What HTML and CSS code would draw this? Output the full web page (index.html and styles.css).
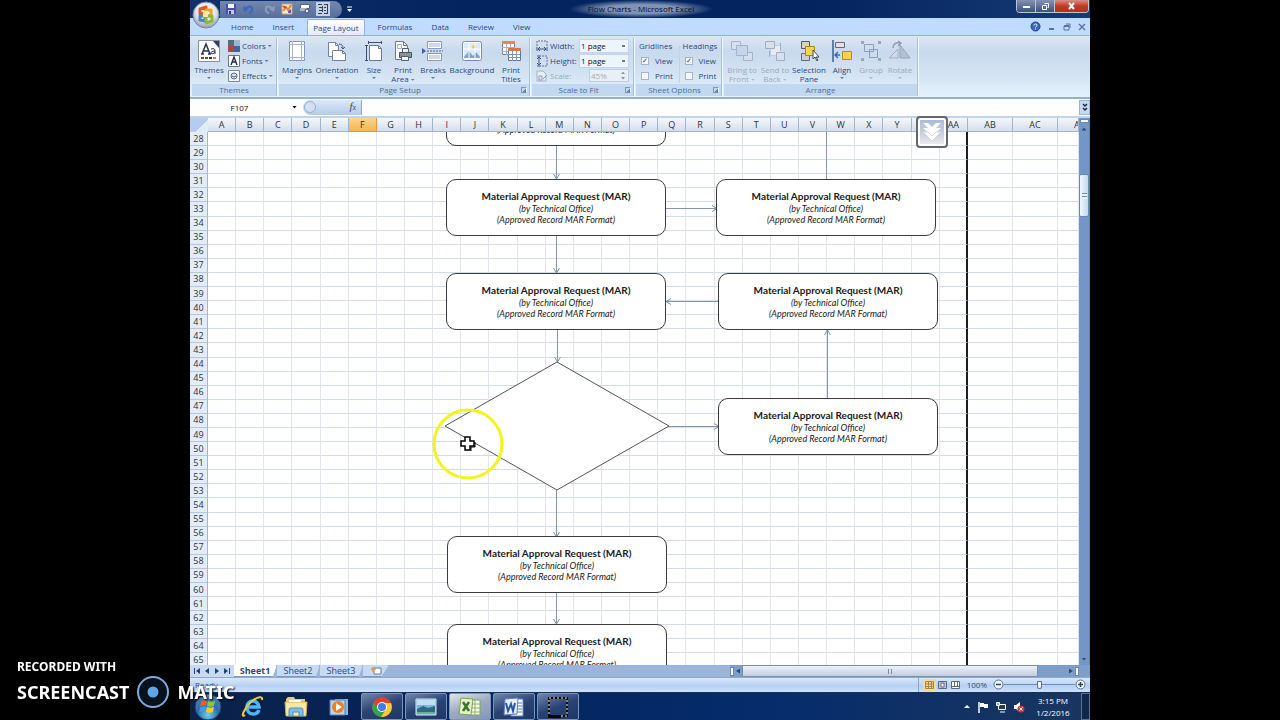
FILE: index.html
```html
<!DOCTYPE html>
<html lang="en">
<head>
  <meta charset="UTF-8" />
  <meta name="viewport" content="width=device-width, initial-scale=1.0"/>
  <title>Flow Charts - Microsoft Excel</title>
  <link rel="stylesheet" href="styles.css">
</head>
<body>
  <div class="desktop">

    <header class="title-bar">
      <button class="office-button" aria-label="Office Button">
        <svg width="28" height="28" viewBox="0 0 28 28">
          <defs>
            <radialGradient id="orb" cx="50%" cy="35%" r="65%">
              <stop offset="0" stop-color="#ffffff"/><stop offset=".6" stop-color="#dfe4ea"/><stop offset="1" stop-color="#8d9bb0"/>
            </radialGradient>
          </defs>
          <circle cx="14" cy="14" r="13" fill="url(#orb)" stroke="#7787a0"/>
          <g fill="none" stroke-width="3" stroke-linejoin="round">
            <path d="M8 8l6-2v6l-6 1z" stroke="#e2591c"/>
            <path d="M14 9l5 0v6h-5z" stroke="#f0a224"/>
            <path d="M8 15h5v5l-5-1z" stroke="#4a83c9"/>
            <path d="M14 15h6v5l-6 2z" stroke="#8bb838"/>
          </g>
          <path d="M11 10h5v6h-5z" fill="#fbe6a0"/>
        </svg>
      </button>
      <div class="quick-access">
        <button aria-label="Save">
          <svg width="12" height="12" viewBox="0 0 12 12"><path d="M1 1h10v10H1z" fill="#4a4fa8"/><path d="M3 1h6v4H3z" fill="#f4f6ff"/><path d="M3 7h6v4H3z" fill="#c4cbe8"/><path d="M4 8h2v3H4z" fill="#2f3480"/></svg>
        </button>
        <button aria-label="Undo">
          <svg width="14" height="12" viewBox="0 0 14 12"><path d="M4 6c2-4 7-3 6 1 0 2-2 3-3 3" fill="none" stroke="#3c66c4" stroke-width="2"/><path d="M1 3l1 6 5-3z" fill="#3c66c4"/></svg>
        </button>
        <button aria-label="Redo">
          <svg width="14" height="12" viewBox="0 0 14 12"><path d="M10 6C8 2 3 3 4 7c0 2 2 3 3 3" fill="none" stroke="#8a9cbb" stroke-width="2"/><path d="M13 3l-1 6-5-3z" fill="#8a9cbb"/></svg>
        </button>
        <button aria-label="Chart">
          <svg width="12" height="12" viewBox="0 0 12 12"><path d="M1 1h10v10H1z" fill="#f6e9d8" stroke="#c9a37d"/><path d="M2 8l3-4 2 3 3-5" fill="none" stroke="#e08a3c" stroke-width="2"/><path d="M2 3l3 2" stroke="#d2472c" stroke-width="2"/><path d="M7 8l3-2v4H7z" fill="#6f58b0"/></svg>
        </button>
        <button aria-label="Print preview">
          <svg width="12" height="12" viewBox="0 0 12 12"><path d="M1.500 1.500h9v4h-9z" fill="#fff" stroke="#5a6478"/><path d="M1 5h7v3H1z" fill="#aab4c6"/><circle cx="8" cy="8" r="2" fill="#dfe9f8" stroke="#39455c"/></svg>
        </button>
        <button class="pressed" aria-label="Camera">
          <svg width="12" height="12" viewBox="0 0 12 12"><path d="M1 1.500h4M7 1.500h4M1 10.500h4M7 10.500h4M10.500 2v8" stroke="#333d50"/><path d="M2 4.500h3M2 7.500h3M7 4.500h2M7 7.500h2" stroke="#333d50"/><path d="M5.500 3v6" stroke="#333d50"/></svg>
        </button>
      </div>
      <button class="customize" aria-label="Customize Quick Access Toolbar">
        <svg width="7" height="7" viewBox="0 0 7 7"><path d="M1 1h5" stroke="#fff"/><path d="M1 3h5L3.500 6z" fill="#fff"/></svg>
      </button>
      <h1>Flow Charts - Microsoft Excel</h1>
      <div class="window-controls">
        <button aria-label="Minimize"><svg width="9" height="8" viewBox="0 0 9 8"><path d="M1 4h7v2H1z" fill="#fff"/></svg></button>
        <button aria-label="Restore"><svg width="9" height="9" viewBox="0 0 9 9"><path d="M3.500 1.500h4v4h-1M1.500 3.500h4v4h-4z" fill="none" stroke="#fff"/></svg></button>
        <button class="close" aria-label="Close"><svg width="9" height="8" viewBox="0 0 9 8"><path d="M2 1l5 6M7 1L2 7" stroke="#fff" stroke-width="2"/></svg></button>
      </div>
    </header>

    <nav class="ribbon-tabs">
      <button>Home</button>
      <button>Insert</button>
      <button class="active">Page Layout</button>
      <button>Formulas</button>
      <button>Data</button>
      <button>Review</button>
      <button>View</button>
      <div class="book-controls">
        <button aria-label="Help"><svg width="11" height="11" viewBox="0 0 11 11"><circle cx="5.500" cy="5.500" r="4.500" fill="#3a66c0" stroke="#1f4590"/><path d="M4 4.500c0-2 3-2 3 0 0 1-1.500 1-1.500 2M5.500 7.500v1" fill="none" stroke="#fff"/></svg></button>
        <button aria-label="Minimize workbook"><svg width="8" height="8" viewBox="0 0 8 8"><path d="M1 5h5v2H1z" fill="#5c7396"/></svg></button>
        <button aria-label="Restore workbook"><svg width="8" height="8" viewBox="0 0 8 8"><path d="M3 1h4v4M1 3h5v4H1z" fill="none" stroke="#5c7396"/><path d="M1 2h5v2H1z" fill="#5c7396"/></svg></button>
        <button aria-label="Close workbook"><svg width="8" height="8" viewBox="0 0 8 8"><path d="M1 1l6 6M7 1L1 7" stroke="#5c7396" stroke-width="1.400"/></svg></button>
      </div>
    </nav>

    <div class="ribbon">
      <section class="group themes">
        <div class="tools">
          <button class="tool">
            <svg width="22" height="22" viewBox="0 0 22 22"><path d="M.5.500h21v21H.500z" fill="#fdfdfd" stroke="#8a919d"/><path d="M4 14L8 4l4 10M5 11h6M3 14h3M10 14h3" fill="none" stroke="#26324c" stroke-width="1.500"/><path d="M13 9c3-1 4 0 4 2v3M17 11c-3 0-4 1-4 2s3 1 4-1" fill="none" stroke="#26324c"/><path d="M15 1h6v7z" fill="#34406e"/><path d="M3 17h3v2H3z" fill="#7a4b2c"/><path d="M7 17h3v2H7z" fill="#425b32"/><path d="M11 17h3v2h-3z" fill="#333"/><path d="M15 17h3v2h-3z" fill="#b08d3a"/></svg>
            <span>Themes</span><i class="down"></i>
          </button>
          <div class="stack">
            <button><svg width="12" height="12" viewBox="0 0 12 12"><path d="M0 0h6v6H0z" fill="#5a6a80"/><path d="M6 0h6v6H6z" fill="#9fb6d0"/><path d="M0 6h6v6H0z" fill="#a8483e"/><path d="M6 6h6v6H6z" fill="#39699f"/></svg>Colors<i class="down"></i></button>
            <button><svg width="12" height="12" viewBox="0 0 12 12"><path d="M.5.5h11v11H.5z" fill="#fff" stroke="#6a7686"/><path d="M3 10l3-8 3 8M4 7h4" fill="none" stroke="#222c44" stroke-width="1.400"/></svg>Fonts<i class="down"></i></button>
            <button><svg width="12" height="12" viewBox="0 0 12 12"><path d="M.5.5h11v11H.5z" fill="#f4f8fd" stroke="#7c8797"/><circle cx="6" cy="6" r="3" fill="#dbe6f5" stroke="#546585"/><path d="M4 6l2 1 2-1" fill="none" stroke="#546585"/></svg>Effects<i class="down"></i></button>
          </div>
        </div>
        <h2>Themes</h2>
      </section>

      <section class="group page-setup">
        <div class="tools">
          <button class="tool">
            <svg width="20" height="22" viewBox="0 0 20 22"><path d="M2.500 1.500h15v19h-15z" fill="#fff" stroke="#8496b4"/><path d="M5.500 1v20M14.500 1v20M2 4.500h16M2 17.500h16" stroke="#a3b5d2"/></svg>
            <span>Margins</span><i class="down"></i>
          </button>
          <button class="tool">
            <svg width="20" height="22" viewBox="0 0 20 22"><path d="M1.500 2.500h7l3 3v11h-10z" fill="#fff" stroke="#73839d"/><path d="M8.500 2.500v3h3" fill="none" stroke="#73839d"/><path d="M5.500 10.500h10l3 3v7h-13z" fill="#fff" stroke="#73839d"/><path d="M15.500 10.500v3h3" fill="none" stroke="#73839d"/><path d="M12 4c3 0 4 2 4 4m-2-1l2 2 2-2" fill="none" stroke="#4a5978"/></svg>
            <span>Orientation</span><i class="down"></i>
          </button>
          <button class="tool">
            <svg width="20" height="22" viewBox="0 0 20 22"><path d="M5.500 5.500h9l3 3v12h-12z" fill="#fff" stroke="#687898"/><path d="M14.500 5.500v3h3" fill="none" stroke="#687898"/><path d="M4 2.500h14M4.500 1v3M17.500 1v3M2.500 5v15M1 5.500h3M1 20.500h3" fill="none" stroke="#3f4f72"/></svg>
            <span>Size</span><i class="down"></i>
          </button>
          <button class="tool">
            <svg width="20" height="22" viewBox="0 0 20 22"><path d="M2.500 1.500h8l4 4v14h-12z" fill="#fff" stroke="#687898"/><path d="M10.500 1.500v4h4" fill="none" stroke="#687898"/><path d="M4.500 4.500h4v4h-4z" fill="#fbfdff" stroke="#9fb0c8"/><path d="M9.500 8.500h6v4h-6z" fill="#eef1f5" stroke="#555e6c"/><path d="M6.500 12.500h12v5h-12z" fill="#8b8f96" stroke="#4b5260"/><path d="M8.500 16.500h7v4h-7z" fill="#f8f8f8" stroke="#555e6c"/><circle cx="17" cy="14" r="1" fill="#5ad04b"/></svg>
            <span>Print<br>Area <i class="down"></i></span>
          </button>
          <button class="tool">
            <svg width="22" height="22" viewBox="0 0 22 22"><path d="M5.500 1.500h14v7h-14zM5.500 13.500h14v7h-14z" fill="#fff" stroke="#8b9ab2"/><path d="M7 4h11M7 6h11M7 16h11M7 18h11" stroke="#a5b3c9"/><path d="M5 11h16" stroke="#50658c" stroke-dasharray="2 1"/><path d="M0 8l4 3-4 3z" fill="#3c63b0"/></svg>
            <span>Breaks</span><i class="down"></i>
          </button>
          <button class="tool">
            <svg width="22" height="22" viewBox="0 0 22 22"><rect x="1.500" y="1.500" width="19" height="19" rx="2" fill="#fbfdff" stroke="#7d8ea9"/><path d="M3 3h16v15H3z" fill="#dce9f8"/><path d="M3 17l5-6 4 5 3-4 4 5v1H3z" fill="#7ea3d2"/><circle cx="13" cy="7" r="2" fill="#f3c25a"/><path d="M3 9h16M8 3v15M14 3v15" stroke="#fff"/></svg>
            <span>Background</span>
          </button>
          <button class="tool">
            <svg width="20" height="22" viewBox="0 0 20 22"><path d="M1.500 1.500h12v13h-12z" fill="#fff" stroke="#7485a0"/><path d="M1 1h13v3H1z" fill="#e08958"/><path d="M1 7.500h13M1 11.500h13M5.500 4v11M9.500 4v11" stroke="#9fb0ca"/><path d="M7.500 8.500h12v12h-12z" fill="#fff" stroke="#60759a"/><path d="M7 8h13v3H7z" fill="#d97844"/><path d="M7 14.500h12M7 17.500h12M11.500 11v10M15.500 11v10" stroke="#8096b8"/></svg>
            <span>Print<br>Titles</span>
          </button>
        </div>
        <h2>Page Setup<button class="launcher" aria-label="Page Setup options"></button></h2>
      </section>

      <section class="group scale">
        <div class="fields">
          <svg width="12" height="12" viewBox="0 0 12 12"><path d="M1 6V1h10v5" fill="none" stroke="#63738f" stroke-dasharray="2 1"/><path d="M1 7v4M11 7v4M2 9h8M4 7L2 9l2 2M8 7l2 2-2 2" fill="none" stroke="#40527a"/></svg>
          <label for="fit-width">Width:</label>
          <select id="fit-width"><option>1 page</option></select>
          <svg width="12" height="12" viewBox="0 0 12 12"><path d="M6 1h5v10H6" fill="none" stroke="#63738f" stroke-dasharray="2 1"/><path d="M1 1h4M1 11h4M3 2v8M1 4l2-2 2 2M1 8l2 2 2-2" fill="none" stroke="#40527a"/></svg>
          <label for="fit-height">Height:</label>
          <select id="fit-height"><option>1 page</option></select>
          <svg width="12" height="12" viewBox="0 0 12 12"><path d="M1 1h6l3 3v7H1z" fill="#e5edf7" stroke="#a3b1c6"/><path d="M3 6h3v4H3zM7 9l4-4" fill="none" stroke="#8d9cb5"/></svg>
          <label class="off" for="fit-scale">Scale:</label>
          <div class="spinner"><input id="fit-scale" type="text" value="45%" disabled><i></i></div>
        </div>
        <h2>Scale to Fit<button class="launcher" aria-label="Scale to Fit options"></button></h2>
      </section>

      <section class="group options">
        <div class="checks">
          <fieldset>
            <legend>Gridlines</legend>
            <label><input type="checkbox" checked>View</label>
            <label><input type="checkbox">Print</label>
          </fieldset>
          <fieldset>
            <legend>Headings</legend>
            <label><input type="checkbox" checked>View</label>
            <label><input type="checkbox">Print</label>
          </fieldset>
        </div>
        <h2>Sheet Options<button class="launcher" aria-label="Sheet Options options"></button></h2>
      </section>

      <section class="group arrange">
        <div class="tools">
          <button class="tool" disabled>
            <svg width="24" height="22" viewBox="0 0 24 22"><g fill="#d5dfed" stroke="#a5b2c8"><path d="M1.500 1.500h9v8h-9zM13.500 12.500h9v8h-9z"/><path d="M6.500 5.500h11v10h-11z" fill="#c7d5ea"/></g></svg>
            <span>Bring to<br>Front <i class="down"></i></span>
          </button>
          <button class="tool" disabled>
            <svg width="22" height="22" viewBox="0 0 22 22"><path d="M6.500 5.500h10v10h-10z" fill="#e4ebf5" stroke="#c0cbdd"/><path d="M1.500 1.500h9v7h-9zM12.500 12.500h8v8h-8z" fill="#d8e0ec" stroke="#a0adc4"/><path d="M16.500 3v7M5.500 11v6" stroke="#a0adc4"/></svg>
            <span>Send to<br>Back <i class="down"></i></span>
          </button>
          <button class="tool">
            <svg width="20" height="22" viewBox="0 0 20 22"><path d="M2.500 1.500h8v7h-8z" fill="#d8d4b8" stroke="#565a60"/><path d="M2.500 13.500h8v7h-8z" fill="#cbd0d6" stroke="#626b7a"/><path d="M6.500 6.500h9v9h-9z" fill="#f5d648" stroke="#a88719"/><path d="M14 10v9l2-2 2 4 1-1-2-3h3z" fill="#fff" stroke="#424b60"/></svg>
            <span>Selection<br>Pane</span>
          </button>
          <button class="tool">
            <svg width="20" height="22" viewBox="0 0 20 22"><path d="M1 0v22" stroke="#3f5d90" stroke-width="1.500"/><path d="M3.500 2.500h9v5h-9z" fill="#e5e1e1" stroke="#6f6670"/><path d="M10.500 11.500h9v8h-9z" fill="#f7d244" stroke="#b58d1b"/><path d="M3 15h5M6 12l-3 3 3 3" fill="none" stroke="#2f6cc0" stroke-width="1.500"/></svg>
            <span>Align</span><i class="down"></i>
          </button>
          <button class="tool" disabled>
            <svg width="20" height="22" viewBox="0 0 20 22"><g fill="none" stroke="#909eb8"><path d="M3.500 4.500h9v7h-9z"/><path d="M8.500 9.500h8v8h-8z"/></g><path d="M0 1h3v3H0zM17 1h3v3h-3zM0 18h3v3H0zM17 18h3v3h-3z" fill="#98a6be"/></svg>
            <span>Group</span><i class="down"></i>
          </button>
          <button class="tool" disabled>
            <svg width="22" height="22" viewBox="0 0 22 22"><path d="M0 18l9-9v9z" fill="#d0d9e7" stroke="#a3afc4"/><path d="M11 18V5l10 13z" fill="#b4c0d3" stroke="#98a5bb"/><path d="M4 8c0-4 3-6 7-5M9 1l3 2-3 3" fill="none" stroke="#8e9cb6" stroke-width="1.500"/></svg>
            <span>Rotate</span><i class="down"></i>
          </button>
        </div>
        <h2>Arrange</h2>
      </section>
    </div>

    <div class="formula-bar">
      <input class="name-box" type="text" value="F107" aria-label="Name Box">
      <i class="down"></i>
      <div class="fx"><span></span><button aria-label="Insert Function"><em>f</em><sub>x</sub></button></div>
      <input class="formula" type="text" aria-label="Formula Bar">
      <button class="expand" aria-label="Expand Formula Bar">
        <svg width="8" height="9" viewBox="0 0 8 9"><path d="M2 1l2 2 2-2M2 5l2 2 2-2" fill="none" stroke="#1c2740" stroke-width="1.500"/></svg>
      </button>
    </div>

    <main class="workspace">
      <div class="sheet">
        <table>
          <colgroup></colgroup>
          <thead><tr></tr></thead>
          <tbody></tbody>
        </table>

        <div class="canvas">
          <svg class="lines" width="100%" height="100%">
            <defs>
              <marker id="tip" viewBox="0 0 8 8" refX="7" refY="4" markerWidth="8" markerHeight="8" markerUnits="userSpaceOnUse" orient="auto">
                <path d="M2 1l5 3-5 3" fill="none" stroke="#7c8fa8"/>
              </marker>
            </defs>
            <g class="connectors">
              <path d="M348.500 14V47"/>
              <path d="M348.500 104V141"/>
              <path d="M349.500 198V230"/>
              <path d="M348.500 358V405"/>
              <path d="M348.500 461V492"/>
              <path d="M458 76.500H509"/>
              <path d="M511 169.500H458"/>
              <path d="M461 294.500H511"/>
              <path d="M619.500 266V198"/>
              <path class="plain" d="M618.500 0V48"/>
            </g>
            <path d="M237 294L349 230L461 294L349 358Z" fill="#fff" stroke="#555"/>
          </svg>
          <article class="step s1"><h3>Material Approval Request (MAR)</h3><p>(by Technical Office)</p><p>(Approved Record MAR Format)</p></article>
          <article class="step s2"><h3>Material Approval Request (MAR)</h3><p>(by Technical Office)</p><p>(Approved Record MAR Format)</p></article>
          <article class="step s3"><h3>Material Approval Request (MAR)</h3><p>(by Technical Office)</p><p>(Approved Record MAR Format)</p></article>
          <article class="step s4"><h3>Material Approval Request (MAR)</h3><p>(by Technical Office)</p><p>(Approved Record MAR Format)</p></article>
          <article class="step s5"><h3>Material Approval Request (MAR)</h3><p>(by Technical Office)</p><p>(Approved Record MAR Format)</p></article>
          <article class="step s6"><h3>Material Approval Request (MAR)</h3><p>(by Technical Office)</p><p>(Approved Record MAR Format)</p></article>
          <article class="step s7"><h3>Material Approval Request (MAR)</h3><p>(by Technical Office)</p><p>(Approved Record MAR Format)</p></article>
          <article class="step s8"><h3>Material Approval Request (MAR)</h3><p>(by Technical Office)</p><p>(Approved Record MAR Format)</p></article>
          <svg class="pointer" width="72" height="72" viewBox="0 0 72 72">
            <circle cx="36" cy="36" r="34" fill="none" stroke="#f4f41c" stroke-width="3"/>
            <path d="M33 29h5v4h4v5h-4v4h-5v-4h-4v-5h4z" fill="#fff" stroke="#000" stroke-width="1.500"/>
            <path d="M39 43v-4h4v-5" fill="none" stroke="#000"/>
          </svg>
        </div>
      </div>
      <div class="scroll-v">
        <span class="split"></span>
        <button class="arrow up" aria-label="Scroll up"></button>
        <div class="track"><span class="thumb"></span></div>
        <button class="arrow dn" aria-label="Scroll down"></button>
      </div>
      <button class="collapse" aria-label="Scroll down fast">
        <svg width="24" height="24" viewBox="0 0 24 24"><path d="M3 3h5l4 4 4-4h5l-5 5h5l-9 8-9-8h5z" fill="#fff"/><path d="M3 12h5l4 4 4-4h5l-9 9z" fill="#fff" stroke="#d5d8e4"/></svg>
      </button>
    </main>

    <footer class="sheet-bar">
      <div class="sheet-nav">
        <button aria-label="First sheet"><svg width="8" height="8" viewBox="0 0 8 8"><path d="M1 1h1v6H1zM7 1v6L3 4z" fill="#23406e"/></svg></button>
        <button aria-label="Previous sheet"><svg width="8" height="8" viewBox="0 0 8 8"><path d="M6 1v6L2 4z" fill="#23406e"/></svg></button>
        <button aria-label="Next sheet"><svg width="8" height="8" viewBox="0 0 8 8"><path d="M2 1v6l4-3z" fill="#23406e"/></svg></button>
        <button aria-label="Last sheet"><svg width="8" height="8" viewBox="0 0 8 8"><path d="M1 1v6l4-3zM6 1h1v6H6z" fill="#23406e"/></svg></button>
      </div>
      <div class="sheet-tabs">
        <button class="active">Sheet1</button>
        <button>Sheet2</button>
        <button>Sheet3</button>
        <button class="new" aria-label="Insert Worksheet"><svg width="12" height="9" viewBox="0 0 12 9"><path d="M4 2h7v6H4z" fill="#fff" stroke="#69799a"/><path d="M1 3h5M3 1v5" stroke="#e0a030" stroke-width="1.500"/></svg></button>
      </div>
      <div class="scroll-h">
        <span class="split"></span>
        <button class="arrow lt" aria-label="Scroll left"></button>
        <div class="track"><span class="thumb"></span></div>
        <button class="arrow rt" aria-label="Scroll right"></button>
        <span class="split"></span>
      </div>
    </footer>

    <div class="status-bar">
      <span class="ready">Ready</span>
      <div class="views">
        <button class="active" aria-label="Normal"><svg width="9" height="8" viewBox="0 0 9 8"><path d="M.5.5h8v7h-8zM3.500 0v8M6.500 0v8M0 3h9M0 5.500h9" fill="none" stroke="#9c8a55"/></svg></button>
        <button aria-label="Page Layout view"><svg width="9" height="8" viewBox="0 0 9 8"><path d="M.5.5h8v7h-8z" fill="#bcc7d6" stroke="#5d6879"/><path d="M3 2h3v4H3z" fill="#fff" stroke="#5d6879"/></svg></button>
        <button aria-label="Page Break Preview"><svg width="9" height="8" viewBox="0 0 9 8"><path d="M.5.5h8v7h-8z" fill="#fff" stroke="#5d6879"/><path d="M3.500 0v5M6.500 0v5M0 5.500h9" fill="none" stroke="#5d6879"/></svg></button>
      </div>
      <span class="percent">100%</span>
      <button class="round" aria-label="Zoom out"><svg width="11" height="11" viewBox="0 0 11 11"><circle cx="5.500" cy="5.500" r="4.500" fill="#eef4fc" stroke="#5a6f92"/><path d="M3 5.500h5" stroke="#2b4470" stroke-width="1.500"/></svg></button>
      <input class="zoom" type="range" min="0" max="100" value="50" aria-label="Zoom">
      <button class="round" aria-label="Zoom in"><svg width="11" height="11" viewBox="0 0 11 11"><circle cx="5.500" cy="5.500" r="4.500" fill="#eef4fc" stroke="#5a6f92"/><path d="M3 5.500h5M5.500 3v5" stroke="#2b4470" stroke-width="1.500"/></svg></button>
    </div>

    <div class="taskbar">
      <button class="start" aria-label="Start">
        <svg width="28" height="28" viewBox="0 0 28 28">
          <defs><radialGradient id="start" cx="50%" cy="80%" r="80%"><stop offset="0" stop-color="#6fd0f0"/><stop offset=".5" stop-color="#2a6ea8"/><stop offset="1" stop-color="#5b86ae"/></radialGradient></defs>
          <circle cx="14" cy="14" r="13" fill="url(#start)" stroke="#1d3c68"/>
          <path d="M7 9c2-2 4-2 6-1l-1 5c-2-1-4-1-6 1z" fill="#e8602c"/>
          <path d="M14 8c2 1 4 1 7 0l-1 5c-2 1-5 1-7 0z" fill="#8cc63f"/>
          <path d="M6 15c2-2 4-2 6-1l-1 5c-2-1-4-1-6 1z" fill="#3f9be8"/>
          <path d="M13 14c2 1 4 1 7 0l-1 5c-2 1-5 1-7 0z" fill="#fbc82c"/>
        </svg>
      </button>
      <div class="apps">
        <button aria-label="Internet Explorer"><svg width="24" height="24" viewBox="0 0 24 24"><path d="M18 15c-1 3-3 4-6 4-4 0-6-3-6-7s3-6 6-6 6 3 6 6H7" fill="none" stroke="#4db8f0" stroke-width="3.500"/><path d="M4 20c-5 4-1-7 6-13S22 1 21 5" fill="none" stroke="#f2c832" stroke-width="2"/></svg></button>
        <button aria-label="Windows Explorer"><svg width="26" height="24" viewBox="0 0 26 24"><path d="M3 4l2-2h6l1 2h10v16H3z" fill="#e9cf73"/><path d="M2 7h22l-1 14H3z" fill="#f7e9a4" stroke="#cfae52"/><path d="M6 5h12v2H6z" fill="#fff"/><path d="M6 21v-6q0-2 2-2h10q2 0 2 2v6h-4v-4h-6v4z" fill="#7fbde6" stroke="#4f93c4"/></svg></button>
        <button aria-label="Media Player"><svg width="24" height="24" viewBox="0 0 24 24"><path d="M8 4h13v16H8z" fill="#8fb4d8"/><path d="M3 5h15v15H3z" fill="#b9d2ea" stroke="#5681ad"/><circle cx="11" cy="12" r="6" fill="#ef7d22"/><path d="M9 8l6 4-6 4z" fill="#fff"/></svg></button>
        <button class="open" aria-label="Chrome"><svg width="24" height="24" viewBox="0 0 24 24"><circle cx="12" cy="12" r="10" fill="#e0412f"/><path d="M3 8a10 10 0 0 0 8 14l5-9H9z" fill="#32a350"/><path d="M11 22a10 10 0 0 0 10-14h-9l4 6z" fill="#fbcb2f"/><circle cx="12" cy="12" r="5" fill="#fff"/><circle cx="12" cy="12" r="4" fill="#3d7de4"/></svg></button>
        <button class="open" aria-label="Photo"><svg width="24" height="20" viewBox="0 0 24 20"><path d="M2 2h20v16H2z" fill="#7db6dc" stroke="#d8e6f2"/><path d="M3 3h18v5H3z" fill="#bfe0f4"/><path d="M3 12l6-3 5 2 7-2v8H3z" fill="#2d6a83"/><path d="M3 15h18v2H3z" fill="#6cae9a"/></svg></button>
        <button class="open lit" aria-label="Excel"><svg width="24" height="24" viewBox="0 0 24 24"><path d="M9 5h13v15H9z" fill="#f6fbf0" stroke="#7da552"/><path d="M10 9h12M10 13h12M10 17h12M17 5v15" stroke="#8db665"/><path d="M3 3l12 1-2 16-12-1z" fill="#e4f0d4" stroke="#78a34b"/><path d="M5 7l6 9M11 7l-6 9" stroke="#3e7426" stroke-width="2.500"/></svg></button>
        <button class="open" aria-label="Word"><svg width="24" height="24" viewBox="0 0 24 24"><path d="M9 4h12v17H9z" fill="#fff" stroke="#5b80bd"/><path d="M14 8h6M14 11h6M14 14h6M14 17h6" stroke="#5577ad"/><path d="M3 4l13-1-1 16-13 1z" fill="#e6eefa" stroke="#5b80bd"/><path d="M4 8l2 8 3-7 2 7 2-8" fill="none" stroke="#2a57a5" stroke-width="2"/></svg></button>
        <button class="open" aria-label="Recorder"><svg width="24" height="24" viewBox="0 0 24 24"><path d="M3 3h18v18H3z" fill="none" stroke="#000" stroke-width="2"/><path d="M3 3h18v18H3z" fill="none" stroke="#fff" stroke-dasharray="2 2"/><path d="M2 20h13v3H2z" fill="#000"/></svg></button>
      </div>
      <div class="tray">
        <button aria-label="Show hidden icons"><svg width="8" height="8" viewBox="0 0 8 8"><path d="M1 5l3-3 3 3z" fill="#fff"/></svg></button>
        <svg width="12" height="12" viewBox="0 0 12 12"><path d="M2 1v11" stroke="#fff" stroke-width="1.500"/><path d="M3 2h4v1h4v4H7V6H3z" fill="#fff"/></svg>
        <svg width="12" height="12" viewBox="0 0 12 12"><path d="M3.500 3.500h7v5h-7z" fill="#273a5c" stroke="#fff"/><path d="M5 11h5M1.500 1.500h3v3h-3z" fill="#9fb0c8" stroke="#fff"/></svg>
        <svg width="12" height="12" viewBox="0 0 12 12"><path d="M1 4h2l4-3v10L3 8H1z" fill="#fff"/><circle cx="8" cy="8" r="3.500" fill="#d8342c"/><path d="M6.500 6.500l3 3M9.500 6.500l-3 3" stroke="#fff"/></svg>
        <div class="clock"><time>3:15 PM</time><time>1/2/2016</time></div>
        <button class="show-desktop" aria-label="Show desktop"></button>
      </div>
    </div>
  </div>

  <div class="watermark">
    <span class="small">RECORDED WITH</span>
    <div class="brand">
      <span>SCREENCAST</span>
      <svg width="36" height="36" viewBox="0 0 36 36"><circle cx="18" cy="18" r="15" fill="#0b1524" fill-opacity=".8" stroke="#7dabdb" stroke-width="2"/><circle cx="18" cy="18" r="5.500" fill="#62a5e4"/></svg>
      <span>MATIC</span>
    </div>
  </div>

  <script>
    const names = [...'ABCDEFGHIJKLMNOPQRSTUVWXYZ', 'AA', 'AB', 'AC', 'AD'];
    const cols = document.querySelector('.sheet colgroup');
    const head = document.querySelector('.sheet thead tr');
    const body = document.querySelector('.sheet tbody');

    cols.innerHTML = '<col class="nums">' + names.map(n => `<col class="col-${n}">`).join('');
    head.innerHTML = '<td class="corner"></td>' + names.map(n => `<th scope="col" class="h-${n}">${n}</th>`).join('');

    for (let row = 28; row <= 65; row++) {
      const tr = document.createElement('tr');
      tr.innerHTML = `<th scope="row">${row}</th>` + names.map(n => `<td class="c-${n}"></td>`).join('');
      body.appendChild(tr);
    }
  </script>
</body>
</html>
```
FILE: styles.css
```css
* {
  box-sizing: border-box;
}

html, body {
  height: 100%;
  margin: 0;
}

body {
  background-color: #000000;
  font-family: "Open Sans", "Noto Sans", sans-serif;
  font-size: 8px;
  color: #2b4a7d;
  overflow: hidden;
}

h1, h2, h3, p {
  margin: 0;
  font-weight: normal;
}

button, input, select {
  font: inherit;
  color: inherit;
  margin: 0;
  padding: 0;
  border: 0;
  background: none;
  border-radius: 0;
}

svg {
  display: block;
  flex: none;
}

/* the captured screen is 5:4 and sits in the middle */
.desktop {
  height: 100%;
  aspect-ratio: 5 / 4;
  margin: 0 auto;
  display: flex;
  flex-direction: column;
  position: relative;
  background-color: #bfdbff;
}

.down {
  display: inline-block;
  width: 4px;
  height: 2px;
  background-color: #5f7ba8;
  clip-path: polygon(0 0, 100% 0, 50% 100%);
}

/* title bar */
.title-bar {
  height: 18px;
  flex: none;
  display: flex;
  align-items: center;
  padding-left: 30px;
  background: linear-gradient(90deg, #10306a, #04245f 30%, #04245f 70%, #173a74);
}

.office-button {
  position: absolute;
  left: 2px;
  top: 1px;
  z-index: 2;
}

.quick-access {
  height: 17px;
  width: 122px;
  display: flex;
  align-items: center;
  justify-content: space-between;
  padding: 0 12px 0 5px;
  border-radius: 0 9px 9px 0;
  background: linear-gradient(#7288ae, #566f9b);
}

.quick-access .pressed {
  background-color: #c5d2e5;
  padding: 1px;
}

.customize {
  width: 14px;
  display: grid;
  place-items: center;
}

.title-bar h1 {
  flex: 1;
  text-align: center;
  font-size: 8px;
  line-height: 18px;
  color: #050d1c;
  padding-right: 90px;
  background: radial-gradient(72px 9px at calc(50% - 45px) 50%, #7f93b6 50%, transparent);
}

.window-controls {
  align-self: flex-start;
  display: flex;
  margin-right: 1px;
  height: 13px;
  border: 1px solid #b9c4d6;
  border-top: 0;
  border-radius: 0 0 4px 4px;
  overflow: hidden;
}

.window-controls button {
  width: 19px;
  display: grid;
  place-items: center;
  background: linear-gradient(#8394b2, #3a5180);
  border-right: 1px solid #b9c4d6;
}

.window-controls .close {
  width: 33px;
  border-right: 0;
  background: linear-gradient(#d98e82, #c13a25 50%, #b0301c);
}

/* ribbon tabs */
.ribbon-tabs {
  height: 17px;
  flex: none;
  display: flex;
  align-items: stretch;
  gap: 1px;
  padding-left: 32px;
  background-color: #bfdbff;
}

.ribbon-tabs > button {
  padding: 0 9px;
  line-height: 14px;
}

.ribbon-tabs .active {
  padding: 0 5px;
  margin: 1px 3px 0;
  background: linear-gradient(#ffffff, #e1ebf7);
  border: 1px solid #8db2e3;
  border-bottom: 0;
  border-radius: 2px 2px 0 0;
}

.book-controls {
  margin-left: auto;
  display: flex;
  align-items: center;
  gap: 7px;
  padding-right: 4px;
}

/* ribbon */
.ribbon {
  height: 64px;
  flex: none;
  display: flex;
  gap: 2px;
  padding: 2px 2px 1px;
  border-top: 1px solid #8db2e3;
  border-bottom: 2px solid #93b3c8;
  background: linear-gradient(#dce7f4, #c9d9ee 25%, #d5e4f3 65%, #e3f3fc);
}

.group {
  flex: none;
  display: flex;
  flex-direction: column;
  border-right: 1px solid #a5c1de;
  box-shadow: 1px 0 0 #f0f7fd;
}

.group h2 {
  margin-top: auto;
  height: 12px;
  line-height: 11px;
  font-size: 8px;
  text-align: center;
  color: #4d6d9e;
  background-color: #c1d8f0;
}

.themes { width: 85px; }
.page-setup { width: 251px; }
.scale { width: 102px; }
.options { width: 86px; }
.arrange { width: 194px; }

.launcher {
  width: 6px;
  height: 6px;
  align-self: center;
  border: 1px solid #7a94bb;
  border-right-color: #ffffff;
  background: linear-gradient(135deg, transparent 60%, #5f7ba8 60%);
}

.page-setup h2, .scale h2, .options h2 {
  display: grid;
  grid-template-columns: 1fr 8px;
}

.tools {
  display: grid;
  padding-top: 2px;
}

.themes .tools {
  grid-template-columns: 34px 1fr;
}

.page-setup .tools {
  grid-template-columns: 36px 44px 30px 28px 32px 46px 32px;
}

.arrange .tools {
  grid-template-columns: 36px 30px 38px 28px 30px 28px;
}

.tool {
  display: flex;
  flex-direction: column;
  align-items: center;
  line-height: 9px;
  white-space: nowrap;
}

.tool > span {
  margin-top: 3px;
}

.tool > .down {
  margin-top: 3px;
}

.tool .down {
  vertical-align: middle;
}

.tool:disabled {
  color: #9aa8bf;
}

.tool:disabled .down {
  background-color: #a9b6ca;
}

.stack {
  display: flex;
  flex-direction: column;
  gap: 3px;
  padding-left: 2px;
}

.stack button {
  display: flex;
  align-items: center;
  gap: 2px;
  line-height: 12px;
}

.fields {
  display: grid;
  grid-template-columns: 12px 27px 1fr;
  grid-auto-rows: 15px;
  align-items: center;
  column-gap: 2px;
  padding: 0 4px;
}

.fields select {
  appearance: none;
  height: 14px;
  padding-left: 1px;
  color: #111111;
  border: 1px solid #c3d5ec;
  background: linear-gradient(#5f7ba8, #5f7ba8) right 3px center / 3px 2px no-repeat #eef4fc;
}

.off {
  color: #9aa8bf;
}

.spinner {
  margin-left: 10px;
  height: 13px;
  display: flex;
  align-items: center;
  border: 1px solid #c0cddf;
  background-color: #e9eff7;
}

.spinner input {
  width: 0;
  flex: 1;
  padding-left: 1px;
  color: #a5abb5;
}

.spinner i {
  width: 4px;
  height: 8px;
  margin-right: 3px;
  background-color: #8494ad;
  clip-path: polygon(50% 0, 100% 30%, 0 30%, 0 70%, 100% 70%, 50% 100%, 0 70%, 0 30%);
}

.checks {
  display: grid;
  grid-template-columns: 1fr 1fr;
}

.checks fieldset {
  margin: 0;
  padding: 0 0 0 3px;
  border: 0;
  min-width: 0;
}

.checks fieldset + fieldset {
  border-left: 1px solid #c0d2e8;
}

.checks legend {
  padding: 0;
  line-height: 15px;
}

.checks label {
  display: flex;
  align-items: center;
  gap: 6px;
  height: 15px;
}

.checks input {
  appearance: none;
  width: 8px;
  height: 8px;
  margin-left: 2px;
  border: 1px solid #a8b4c4;
  background-color: #f4f6f9;
}

.checks input:checked::before {
  content: "✓";
  display: block;
  font-size: 7px;
  line-height: 6px;
  color: #33415c;
}

/* formula bar */
.formula-bar {
  height: 19px;
  flex: none;
  display: flex;
  align-items: center;
  padding: 1px 0 2px;
  background-color: #ffffff;
  border-bottom: 2px solid #c3d3e8;
}

.name-box {
  width: 99px;
  text-align: center;
  color: #111111;
}

.formula-bar > .down {
  margin: 0 6px 0 3px;
  width: 5px;
  height: 3px;
  background-color: #111111;
}

.fx {
  width: 59px;
  height: 15px;
  display: flex;
  align-items: center;
  justify-content: space-between;
  padding: 0 5px 0 1px;
  border-radius: 8px 0 0 8px;
  background: linear-gradient(#dbe8f8, #b4cbe8);
  border-right: 1px solid #8fa9cc;
}

.fx span {
  width: 12px;
  height: 12px;
  border-radius: 50%;
  border: 1px solid #92aed2;
  background-color: #d3e0f1;
}

.fx button {
  color: #3c4863;
  font-family: "Liberation Serif", serif;
  font-size: 11px;
  line-height: 12px;
}

.fx sub {
  font-size: 8px;
  font-style: italic;
  vertical-align: baseline;
}

.formula {
  flex: 1;
  min-width: 0;
}

.expand {
  width: 11px;
  height: 15px;
  display: grid;
  place-items: center;
  background-color: #c6d9f1;
  border: 1px solid #9ab5d9;
}

/* sheet */
.workspace {
  flex: 1;
  min-height: 0;
  display: flex;
  position: relative;
}

.sheet {
  flex: 1;
  position: relative;
  overflow: hidden;
  background-color: #ffffff;
}

.sheet table {
  width: 100%;
  height: calc(100% + 3px);
  table-layout: fixed;
  border-spacing: 0;
  font-size: 9px;
  line-height: 12px;
  color: #2d3340;
}

.sheet th, .sheet td {
  padding: 0;
  font-weight: normal;
  overflow: hidden;
  white-space: nowrap;
}

.nums { width: 18px; }
.col-AB, .col-AC { width: 45px; }
.col-AD { width: 21px; }

.sheet thead tr {
  height: 14px;
}

.sheet thead th {
  background: linear-gradient(#f5f7fb, #d6deeb);
  border-right: 1px solid #9eb6ce;
  border-bottom: 1px solid #9eb6ce;
}

.sheet thead .h-F {
  background: linear-gradient(#fad690, #f4b54c);
  border-color: #e0993a;
}

.sheet thead .h-AD {
  text-align: left;
  padding-left: 16px;
}

.sheet .corner {
  background: linear-gradient(135deg, #b4cdee 60%, #dfeafa 60%);
}

.sheet tbody th {
  background-color: #e4ecf7;
  border-right: 1px solid #9eb6ce;
  border-bottom: 1px solid #b5c6da;
}

.sheet tbody td {
  border-right: 1px solid #e2e6ec;
  border-bottom: 1px solid #d6dce5;
}

.sheet tbody .c-AA {
  border-right: 2px solid #1c1c1c;
}

/* drawing layer over the cells */
.canvas {
  position: absolute;
  left: 18px;
  top: 14px;
  right: 0;
  bottom: 0;
  overflow: hidden;
}

.connectors path {
  stroke: #8496ad;
  fill: none;
  marker-end: url(#tip);
}

.connectors .plain {
  marker-end: none;
}

.step {
  position: absolute;
  width: 220px;
  height: 57px;
  padding-top: 10px;
  text-align: center;
  font-family: Lato, sans-serif;
  color: #1a1a1a;
  background-color: #ffffff;
  border: 1px solid #3c3c3c;
  border-radius: 10px;
}

.step h3 {
  font-size: 10px;
  font-weight: bold;
  line-height: 13px;
}

.step p {
  font-size: 9px;
  font-style: italic;
  line-height: 11px;
}

.s1 { left: 238px; top: -43px; }
.s2 { left: 238px; top: 47px; }
.s3 { left: 508px; top: 47px; }
.s4 { left: 238px; top: 141px; }
.s5 { left: 510px; top: 141px; }
.s6 { left: 510px; top: 266px; }
.s7 { left: 239px; top: 404px; }
.s8 { left: 239px; top: 492px; }

.pointer {
  position: absolute;
  left: 224px;
  top: 276px;
}

.collapse {
  position: absolute;
  right: 142px;
  top: -2px;
  width: 32px;
  height: 32px;
  display: grid;
  place-items: center;
  border: 2px solid #63676f;
  border-radius: 4px;
  background: linear-gradient(#a9b7dc, #cfd1dc 60%, #f0f0f2);
  box-shadow: inset 0 0 0 2px #ffffff;
}

/* scroll bars */
.scroll-v {
  width: 11px;
  flex: none;
  display: flex;
  flex-direction: column;
  align-items: center;
  background-color: #7396c6;
  border-right: 1px solid #5d82b6;
}

.scroll-v .split {
  width: 9px;
  height: 4px;
  margin-top: 1px;
  background-color: #ffffff;
  border: 1px solid #6b88b3;
}

.scroll-v .arrow {
  width: 10px;
  height: 12px;
}

.arrow::before {
  content: "";
  display: block;
  width: 5px;
  height: 3px;
  margin: 0 auto;
  background-color: #2b4a7d;
}

.up::before { clip-path: polygon(50% 0, 100% 100%, 0 100%); }
.dn::before { clip-path: polygon(0 0, 100% 0, 50% 100%); }

.scroll-v .track {
  flex: 1;
  width: 100%;
  padding-top: 39px;
}

.scroll-v .thumb {
  display: block;
  height: 43px;
  border: 1px solid #6b88b3;
  border-radius: 2px;
  background: repeating-linear-gradient(#6b88b3 0 1px, #eaf2fb 1px 3px) center / 5px 6px no-repeat, linear-gradient(90deg, #f0f6fd, #c3d7ee);
}

.sheet-bar {
  height: 12px;
  flex: none;
  display: flex;
  background-color: #9ab5d9;
}

.sheet-nav {
  width: 44px;
  display: flex;
  align-items: center;
  justify-content: space-around;
  padding: 0 2px;
  background-color: #c7daf3;
}

.sheet-tabs {
  flex: 1;
  display: flex;
}

.sheet-tabs button {
  width: 43px;
  font-size: 9px;
  line-height: 11px;
  background-color: #c7daf3;
  border-right: 1px solid #8ba6cc;
  border-bottom: 1px solid #7d99c2;
  clip-path: polygon(0 0, 100% 0, 90% 100%, 0 100%);
}

.sheet-tabs .active {
  font-weight: bold;
  background-color: #ffffff;
}

.sheet-tabs .new {
  width: 26px;
  display: grid;
  place-items: center;
  clip-path: polygon(0 0, 100% 0, 70% 100%, 0 100%);
}

.scroll-h {
  width: 40%;
  flex: none;
  display: flex;
  align-items: center;
  padding-right: 11px;
  background-color: #7d9dca;
}

.scroll-h .split {
  width: 4px;
  height: 9px;
  background-color: #ffffff;
  border: 1px solid #6b88b3;
}

.scroll-h .arrow {
  width: 8px;
}

.lt::before { clip-path: polygon(100% 0, 100% 100%, 0 50%); }
.rt::before { clip-path: polygon(0 0, 100% 50%, 0 100%); }

.scroll-h .arrow::before {
  width: 4px;
  height: 5px;
}

.scroll-h .track {
  flex: 1;
  height: 100%;
}

.scroll-h .thumb {
  display: block;
  width: 91%;
  height: 100%;
  border: 1px solid #7a8faf;
  background: repeating-linear-gradient(90deg, #7a8faf 0 1px, transparent 1px 3px) center / 4px 5px no-repeat, linear-gradient(#eef2f8, #c3cddd);
}

/* status bar */
.status-bar {
  height: 15px;
  flex: none;
  display: flex;
  align-items: center;
  padding: 0 4px 0 5px;
  background: linear-gradient(#8fa9cc 0 1px, #d9e8fb 1px, #b4d0f4 60%, #cfe2fa);
}

.views {
  margin-left: auto;
  display: flex;
  height: 100%;
  align-items: center;
  padding-left: 4px;
  border-left: 1px solid #8ba6cc;
}

.views button {
  width: 13px;
  height: 12px;
  display: grid;
  place-items: center;
}

.views .active {
  background-color: #f7dc8c;
}

.percent {
  margin: 0 6px 0 5px;
}

.zoom {
  appearance: none;
  width: 71px;
  height: 10px;
  background: linear-gradient(#6f8bb5, #6f8bb5) center / 100% 1px no-repeat;
}

.zoom::-webkit-slider-thumb {
  appearance: none;
  width: 5px;
  height: 8px;
  border: 1px solid #5a6f92;
  border-radius: 1px 1px 3px 3px;
  background-color: #eef4fc;
}

/* taskbar */
.taskbar {
  height: 28px;
  flex: none;
  display: flex;
  background: linear-gradient(90deg, #0b2148, #04245c 30%, #062c6c 65%, #1a365f);
  border-top: 1px solid #18305c;
}

.start {
  width: 42px;
  padding-left: 4px;
}

.apps {
  display: flex;
  gap: 2px;
}

.apps button {
  width: 41px;
  display: grid;
  place-items: center;
  border: 1px solid transparent;
  border-radius: 2px;
}

.apps .open {
  width: 42px;
  border-color: #7d93b8;
  background: linear-gradient(160deg, #7187ab, #2a4373 50%, #1c3765);
}

.apps .lit {
  background: linear-gradient(160deg, #dfe5ec, #9dabbf 50%, #8397b5);
}

.tray {
  margin-left: auto;
  display: flex;
  align-items: center;
  gap: 6px;
  color: #ffffff;
}

.clock {
  display: flex;
  flex-direction: column;
  text-align: center;
  width: 44px;
  line-height: 12px;
}

.show-desktop {
  width: 9px;
  height: 100%;
  border: 1px solid #5c7090;
  background-color: #10274c;
}

/* recorder watermark */
.watermark {
  position: fixed;
  left: 17px;
  bottom: 10px;
  color: #ffffff;
  font-family: "Noto Sans", sans-serif;
  font-weight: bold;
  z-index: 5;
}

.watermark .small {
  display: block;
  font-size: 12px;
  line-height: 14px;
}

.brand {
  display: flex;
  align-items: center;
  gap: 6px;
  font-size: 18px;
  line-height: 20px;
  text-shadow: 1px 1px 2px #000000;
}
```
